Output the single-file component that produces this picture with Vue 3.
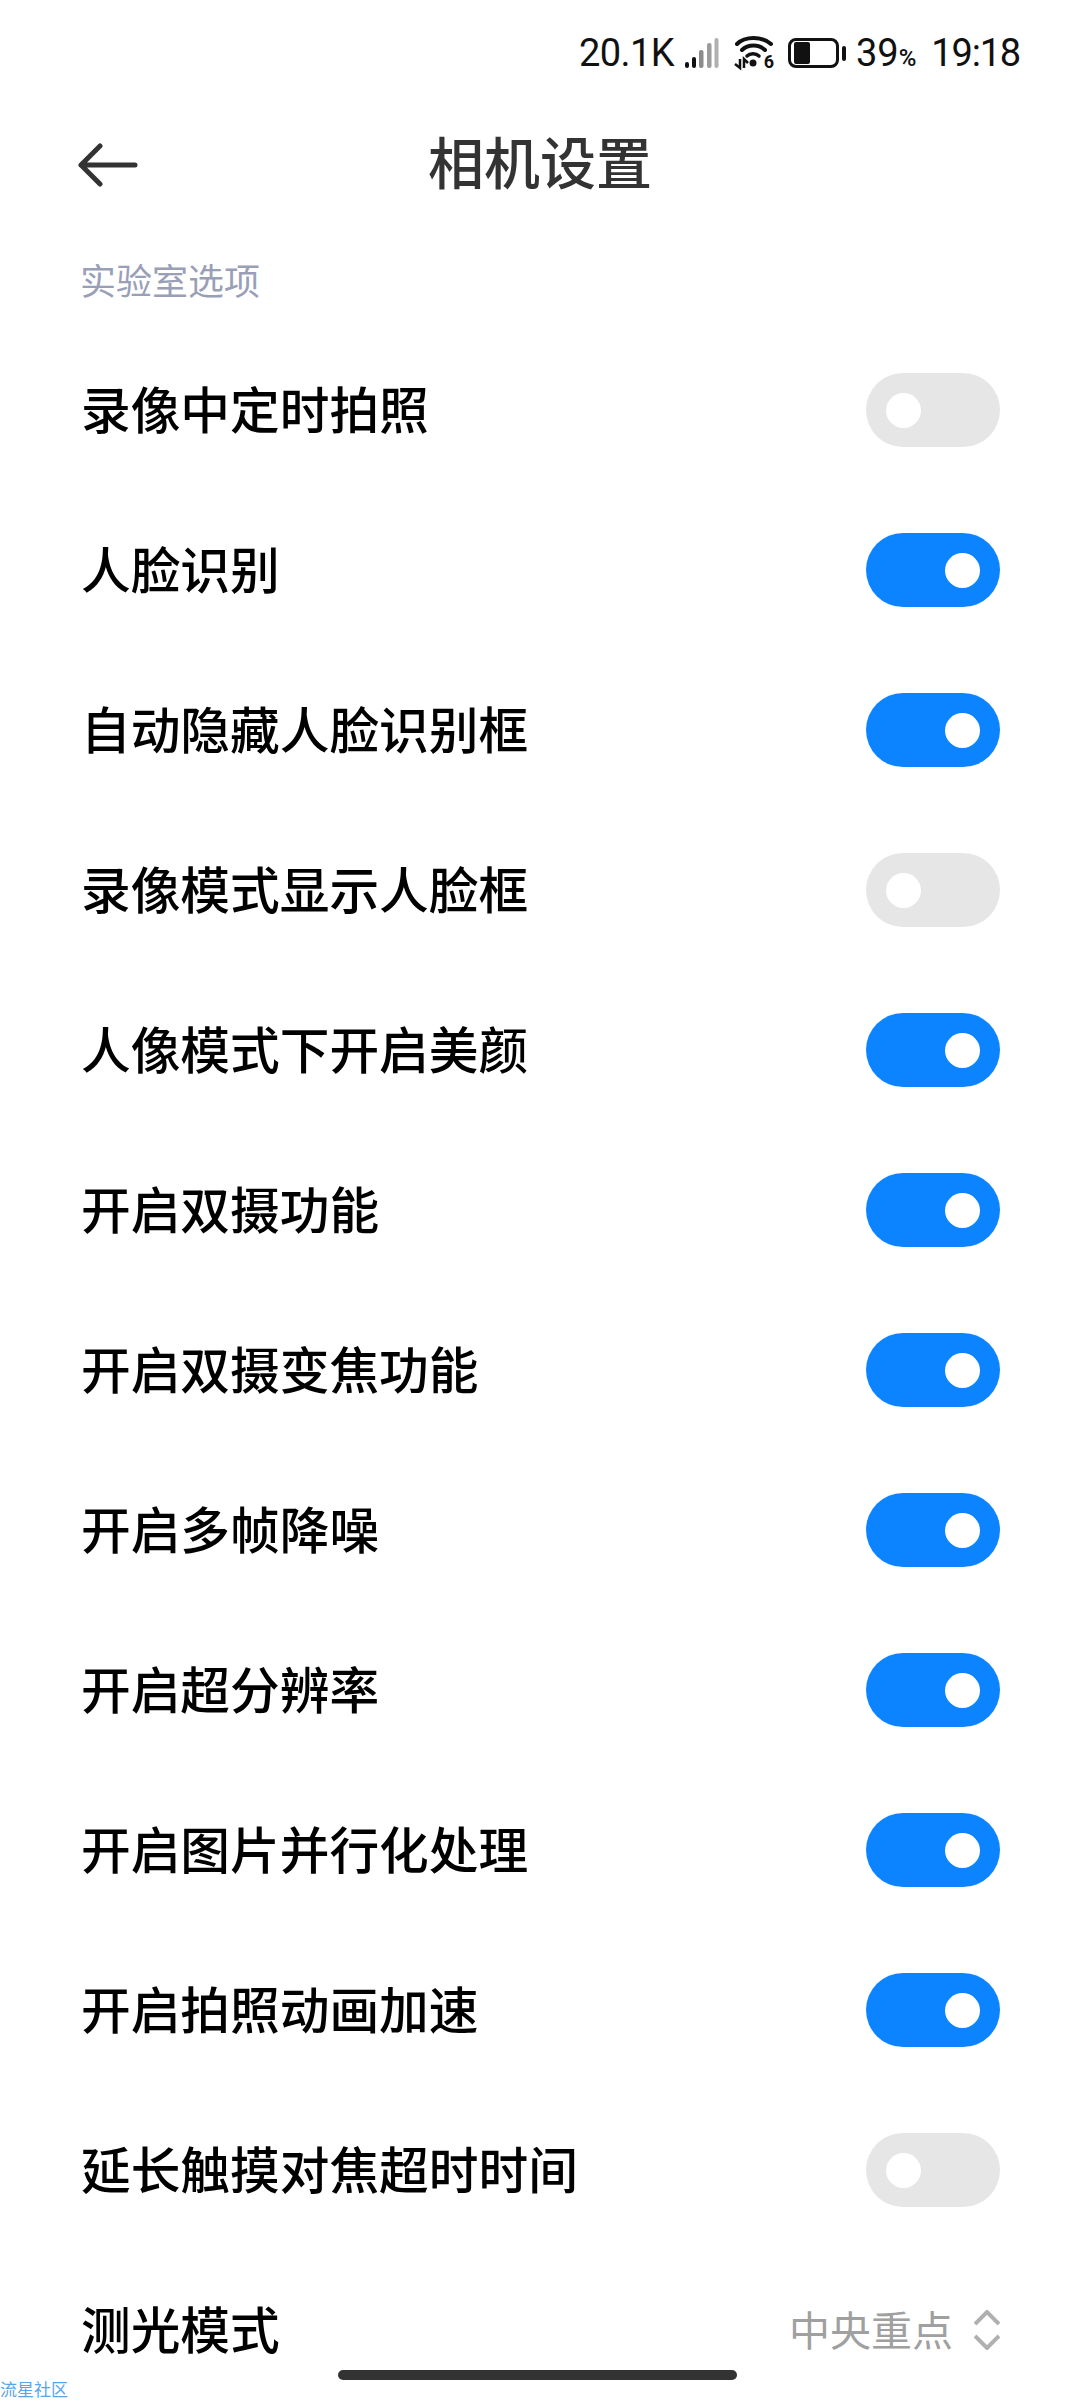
<template>
  <div class="screen">
    <div class="status-bar">
      <span class="speed">20.1K</span>
      <svg class="signal" width="34" height="32" viewBox="0 0 34 32">
        <rect x="0" y="25" width="4" height="6" rx="2" fill="#111" />
        <rect x="7" y="20" width="4" height="11" rx="2" fill="#111" />
        <rect x="14" y="13" width="4.5" height="18" rx="2" fill="#8c8c8c" />
        <rect x="22" y="6" width="4.5" height="25" rx="2" fill="#9c9c9c" />
        <rect x="29.5" y="1" width="4" height="30" rx="2" fill="#b0b0b0" />
      </svg>
      <div class="wifi">
        <svg width="40" height="36" viewBox="0 0 40 36">
          <path d="M3 9 C11 1 28 1 37 9" fill="none" stroke="#111" stroke-width="4" stroke-linecap="round" />
          <path d="M8 15 C14 9 25 9 31 15" fill="none" stroke="#111" stroke-width="4" stroke-linecap="round" />
          <path d="M13 21 C16 18 22 18 25 21" fill="none" stroke="#111" stroke-width="3.5" stroke-linecap="round" />
          <circle cx="19" cy="28" r="3.5" fill="#111" />
          <path d="M6 24 V33 L1 29 M10 33 V24 L14 28" fill="none" stroke="#111" stroke-width="2.5" />
        </svg>
        <span class="wifi-six">6</span>
      </div>
      <div class="battery">
        <div class="battery-body"><div class="battery-level"></div></div>
        <div class="battery-cap"></div>
      </div>
      <span class="level">39<small>%</small></span>
      <span class="time">19:18</span>
    </div>

    <div class="header">
      <svg class="back" width="60" height="44" viewBox="0 0 60 44">
        <path d="M22 3 L3 22 L22 41 M3 22 H57" fill="none" stroke="#333" stroke-width="5" stroke-linecap="round" stroke-linejoin="round" />
      </svg>
      <div class="title">相机设置</div>
    </div>

    <div class="section">实验室选项</div>

    <div class="row" v-for="item in items" :key="item.label">
      <div class="label">{{ item.label }}</div>
      <div class="toggle" :class="{ on: item.on }"><div class="knob"></div></div>
    </div>

    <div class="row">
      <div class="label">测光模式</div>
      <div class="picker">
        <span class="picker-value">中央重点</span>
        <svg width="26" height="40" viewBox="0 0 26 40">
          <path d="M1 14 L13 2 L25 14 M1 26 L13 38 L25 26" fill="none" stroke="#b0b0b0" stroke-width="4" />
        </svg>
      </div>
    </div>

    <div class="home-bar"></div>
    <div class="watermark">流星社区</div>
  </div>
</template>

<script setup>
const items = [
  { label: '录像中定时拍照', on: false },
  { label: '人脸识别', on: true },
  { label: '自动隐藏人脸识别框', on: true },
  { label: '录像模式显示人脸框', on: false },
  { label: '人像模式下开启美颜', on: true },
  { label: '开启双摄功能', on: true },
  { label: '开启双摄变焦功能', on: true },
  { label: '开启多帧降噪', on: true },
  { label: '开启超分辨率', on: true },
  { label: '开启图片并行化处理', on: true },
  { label: '开启拍照动画加速', on: true },
  { label: '延长触摸对焦超时时间', on: false },
];
</script>

<style>
html,
body {
  margin: 0;
  background: #fff;
}
</style>

<style scoped>
.screen {
  position: relative;
  width: 1080px;
  height: 2400px;
  overflow: hidden;
  background: #fff;
  font-family: "Noto Sans CJK SC", "Noto Sans", sans-serif;
}

.status-bar {
  display: flex;
  align-items: center;
  justify-content: flex-end;
  height: 52px;
  padding: 27px 60px 0 0;
  color: #111;
  font-family: Roboto, sans-serif;
  font-size: 38px;
  letter-spacing: -1.2px;
}

.speed {
  letter-spacing: -0.6px;
}

.signal {
  margin-left: 11px;
}

.wifi {
  position: relative;
  display: flex;
  width: 40px;
  height: 36px;
  margin-left: 15px;
}

.wifi-six {
  position: absolute;
  right: 0;
  bottom: 0;
  font-size: 18px;
  font-weight: 700;
  line-height: 18px;
  letter-spacing: 0;
}

.battery {
  display: flex;
  align-items: center;
  margin-left: 14px;
}

.battery-body {
  box-sizing: border-box;
  width: 51px;
  height: 30px;
  padding: 1px 3px;
  border: 3px solid #111;
  border-radius: 8px;
}

.battery-level {
  width: 16px;
  height: 100%;
  border-radius: 2px;
  background: #111;
}

.battery-cap {
  width: 4px;
  height: 15px;
  margin-left: 3px;
  border-radius: 2px;
  background: #111;
}

.level {
  margin-left: 10px;
  letter-spacing: 0;
}

.level small {
  font-size: 24px;
  font-weight: 500;
}

.time {
  margin-left: 15px;
}

.header {
  display: grid;
  grid-template-columns: 1fr auto 1fr;
  align-items: center;
  height: 110px;
  margin-top: 31px;
}

.back {
  margin-left: 78px;
}

.title {
  padding-bottom: 12px;
  color: #333;
  font-size: 56px;
  font-weight: 500;
}

.section {
  margin: 33px 0 25px;
  padding-left: 80px;
  color: #9a9fb8;
  font-size: 36px;
  line-height: 52px;
}

.row {
  display: flex;
  align-items: center;
  justify-content: space-between;
  height: 160px;
  padding: 0 80px 0 81px;
}

.label {
  padding-bottom: 7px;
  color: #000;
  font-size: 49.7px;
  font-weight: 500;
}

.toggle {
  display: flex;
  align-items: center;
  width: 134px;
  height: 74px;
  padding: 0 20px;
  box-sizing: border-box;
  border-radius: 37px;
  background: #e6e6e6;
}

.toggle.on {
  justify-content: flex-end;
  background: #0d84ff;
}

.knob {
  width: 35px;
  height: 35px;
  border-radius: 50%;
  background: #fff;
}

.picker {
  display: flex;
  align-items: center;
  gap: 21px;
  color: #a0a0a0;
  font-size: 41px;
}

.picker-value {
  padding-bottom: 5px;
}

.home-bar {
  position: absolute;
  left: 338px;
  top: 2370px;
  width: 399px;
  height: 10px;
  border-radius: 5px;
  background: #333;
}

.watermark {
  position: absolute;
  left: 0;
  bottom: 0;
  color: #5aa5e8;
  font-size: 17px;
  line-height: 22px;
}
</style>
